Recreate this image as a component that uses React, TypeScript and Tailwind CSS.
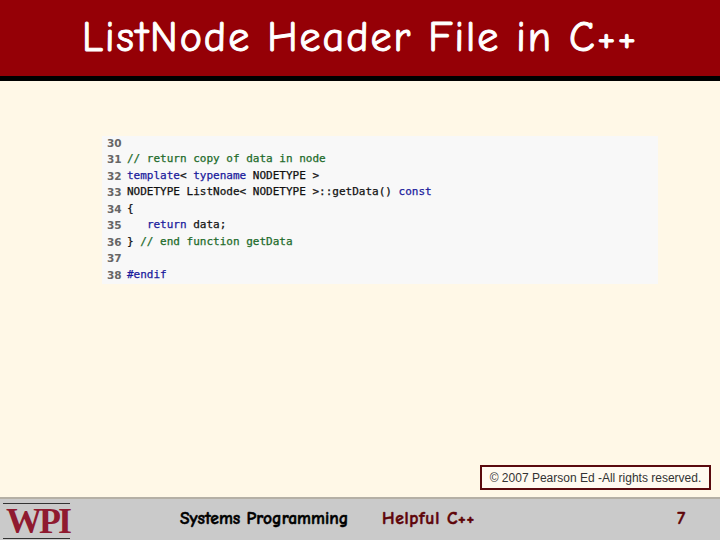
import React from 'react';

interface CodeLine {
  no: number;
  parts: { text: string; color: string }[];
}

const GREEN = 'text-[#1d6b2a]';
const BLUE = 'text-[#1a1a9c]';
const INK = 'text-[#111111]';

const lines: CodeLine[] = [
  { no: 30, parts: [] },
  { no: 31, parts: [{ text: '// return copy of data in node', color: GREEN }] },
  {
    no: 32,
    parts: [
      { text: 'template', color: BLUE },
      { text: '< ', color: INK },
      { text: 'typename', color: BLUE },
      { text: ' NODETYPE >', color: INK },
    ],
  },
  {
    no: 33,
    parts: [
      { text: 'NODETYPE ListNode< NODETYPE >::getData() ', color: INK },
      { text: 'const', color: BLUE },
    ],
  },
  { no: 34, parts: [{ text: '{', color: INK }] },
  {
    no: 35,
    parts: [
      { text: '   ', color: INK },
      { text: 'return', color: BLUE },
      { text: ' data;', color: INK },
    ],
  },
  {
    no: 36,
    parts: [
      { text: '} ', color: INK },
      { text: '// end function getData', color: GREEN },
    ],
  },
  { no: 37, parts: [] },
  { no: 38, parts: [{ text: '#endif', color: BLUE }] },
];

const comic = "font-['Comic_Sans_MS','Comic_Neue',cursive]";

export default function App() {
  return (
    <div className="w-[720px] h-[540px] flex flex-col overflow-hidden bg-[#fff8e7]">
      <header className="h-[81px] shrink-0 bg-[#950006] border-b-[5px] border-black flex items-center pl-[82px]">
        <h1 className={`${comic} text-white text-[42px] leading-none tracking-[2px] [-webkit-text-stroke:1px_white] whitespace-pre`}>
          ListNode Header File in C++
        </h1>
      </header>

      <main className="flex-1 flex flex-col pt-[55px] pl-[102px] pr-[9px] pb-[7px]">
        <div className="w-[556px] h-[148px] bg-[#f8f8f8] pb-[2px] font-['DejaVu_Sans_Mono',monospace] text-[11px] leading-[16.5px] [-webkit-text-stroke:0.25px] flex flex-col justify-center">
          {lines.map((line) => (
            <div key={line.no} className="flex h-[16.5px] whitespace-pre">
              <span className="w-[20px] ml-[5px] font-['DejaVu_Sans',sans-serif] font-semibold text-[10.5px] text-[#666666] [-webkit-text-stroke:0px]">{line.no}</span>
              <span>
                {line.parts.map((part, idx) => (
                  <span key={idx} className={part.color}>{part.text}</span>
                ))}
              </span>
            </div>
          ))}
        </div>

        <div className="mt-auto self-end w-[231px] h-[25px] border-2 border-[#5a0a0e] bg-[#fffaf0] flex items-center justify-center font-['Liberation_Sans',sans-serif] text-[12px] text-[#333333] whitespace-nowrap">
          © 2007 Pearson Ed -All rights reserved.
        </div>
      </main>

      <footer className="h-[43px] shrink-0 bg-[#cacaca] border-t-[2px] border-[#b5b0a5] flex items-center">
        <div className="w-[67px] ml-[3px] h-[36px] mt-[3px] border-y border-[#333333] flex items-center justify-center pl-[2px] font-['Liberation_Serif',serif] font-bold text-[36px] tracking-[-3px] leading-none text-[#8f1a30]">
          WPI
        </div>
        <span className={`${comic} ml-[110px] w-[202px] pb-[2px] font-bold text-[17.5px] [-webkit-text-stroke:0.5px_black] text-black whitespace-nowrap`}>
          Systems Programming
        </span>
        <span className={`${comic} pb-[2px] font-bold text-[17.5px] tracking-[0.7px] [-webkit-text-stroke:0.5px_#5e0408] text-[#5e0408] whitespace-nowrap`}>
          Helpful C++
        </span>
        <span className={`${comic} ml-auto mr-[35px] pb-[2px] font-bold text-[17.5px] [-webkit-text-stroke:0.5px_#5e0408] text-[#5e0408]`}>7</span>
      </footer>
    </div>
  );
}
